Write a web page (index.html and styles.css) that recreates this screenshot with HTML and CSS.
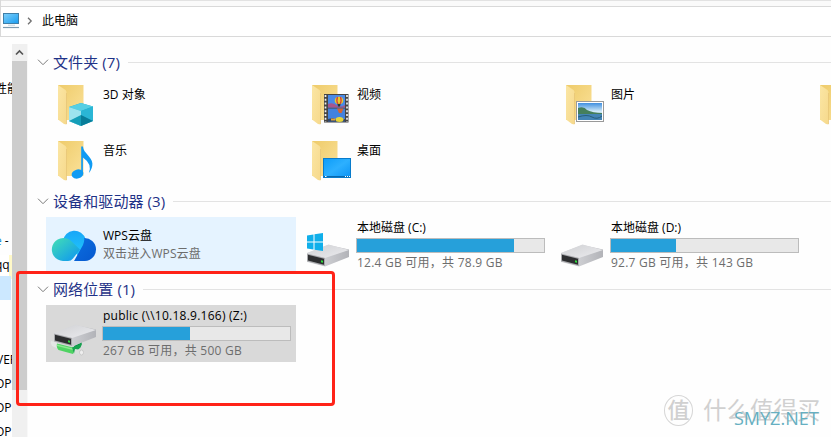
FILE: index.html
```html
<!DOCTYPE html>
<html lang="zh-CN">
<head>
<meta charset="utf-8">
<title>此电脑</title>
<link rel="stylesheet" href="styles.css">
</head>
<body>
<svg width="0" height="0" class="defs">
  <defs>
    <linearGradient id="back" x1="0" y1="0" x2="1" y2="1"><stop offset="0" stop-color="#eecb6a"/><stop offset="1" stop-color="#fbe29a"/></linearGradient>
    <linearGradient id="flap" x1="0" y1="0" x2="1" y2="1"><stop offset="0" stop-color="#fbe6a4"/><stop offset="1" stop-color="#f6d98c"/></linearGradient>
    <linearGradient id="screen" x1="0" y1="0" x2="1" y2="1"><stop offset="0" stop-color="#0c9cf8"/><stop offset=".5" stop-color="#2db0ff"/><stop offset="1" stop-color="#0a93f5"/></linearGradient>
    <linearGradient id="monitor" x1="0" y1="0" x2="1" y2="1"><stop offset="0" stop-color="#7fd0fa"/><stop offset="1" stop-color="#189cf0"/></linearGradient>
    <linearGradient id="metal" x1="0" y1="0" x2="1" y2="1"><stop offset="0" stop-color="#cfd0d3"/><stop offset="1" stop-color="#ececef"/></linearGradient>
    <linearGradient id="side" x1="0" y1="0" x2="1" y2="0"><stop offset="0" stop-color="#e2e3e6"/><stop offset="1" stop-color="#b2b3b8"/></linearGradient>
    <linearGradient id="cloudL" x1="0" y1="0" x2="1" y2="1"><stop offset="0" stop-color="#43e0b4"/><stop offset="1" stop-color="#0c93f3"/></linearGradient>
    <linearGradient id="cloudT" x1="0" y1="0" x2="0" y2="1"><stop offset="0" stop-color="#18a6f8"/><stop offset="1" stop-color="#22c8fb"/></linearGradient>
    <linearGradient id="cloudR" x1="0" y1="0" x2="1" y2="1"><stop offset="0" stop-color="#0b6fe0"/><stop offset="1" stop-color="#0658cf"/></linearGradient>
    <linearGradient id="sky" x1="0" y1="0" x2="0" y2="1"><stop offset="0" stop-color="#3f8fe0"/><stop offset=".5" stop-color="#d3ebf8"/><stop offset="1" stop-color="#9cc9e8"/></linearGradient>
    <g id="folder">
      <path d="M12 8H37.500V43H12Z" fill="url(#back)"/>
      <path d="M12 8L19.500 13Q20.500 14 20.500 16V47.500L18 47L12 42.500Z" fill="url(#flap)"/>
      <path d="M20.500 16V47" stroke="#e5c374" stroke-width=".7"/>
    </g>
    <g id="drive">
      <path d="M7 36L28.500 28L49 32.500V40L25 49.500L7 45Z" fill="url(#side)"/>
      <path d="M7 36L28.500 27.500L49 33L25 41Z" fill="url(#metal)"/>
      <path d="M7 36.500L25 41V49L7 44.500Z" fill="#a8a9ac"/>
      <path d="M8 37.700L24 41.800V47.800L8 43.600Z" fill="#2d2e30"/>
      <path d="M21 43.300l2 .5v2l-2-.5z" fill="#2de03a"/>
    </g>
  </defs>
</svg>

<header class="address">
  <svg class="pc" width="18" height="18" viewBox="0 0 18 18"><rect x=".5" y="1.500" width="15" height="10" fill="url(#monitor)" stroke="#3f7fa8"/><path d="M0 15.500H16" stroke="#7e9cb0" stroke-width="1.200"/><path d="M5 13.200h7" stroke="#c5d4dc"/></svg>
  <svg class="sep" width="6" height="8" viewBox="0 0 6 8"><path d="M1 .8L4.200 4L1 7.200" fill="none" stroke="#707070" stroke-width="1.300"/></svg>
  <span>此电脑</span>
</header>

<div class="window">
  <aside class="tree">
    <span class="t1">性能</span>
    <span class="t2"><i>e</i> -</span>
    <span class="t3">qq</span>
    <span class="picked"></span>
    <span class="t4">VER</span>
    <span class="t5">OP</span>
    <span class="t5">OP</span>
    <span class="t5">OP</span>
  </aside>
  <div class="scrollbar">
    <svg width="15" height="17" viewBox="0 0 15 17"><path d="M4 10.500L7.500 7L11 10.500" fill="none" stroke="#555" stroke-width="1.700"/></svg>
    <div class="thumb"></div>
  </div>

  <main class="content">
    <section class="folders">
      <h2><svg width="12" height="7" viewBox="0 0 12 7"><path d="M1 .7L6 5.700L11 .7" fill="none" stroke="#7a7a7a"/></svg><span>文件夹 (7)</span></h2>
      <div class="grid">
        <div class="tile"><svg class="icon" viewBox="0 0 57 56"><use href="#folder"/><path d="M23 30L35 26L47 29.500V44L35 49L23 44Z" fill="#22a9c9"/><path d="M23 30L35 26L47 29.500L35 34Z" fill="#56cfe4"/><path d="M23 30L35 34V49L23 44Z" fill="#9de3ee"/><path d="M23 44L35 38V49Z" fill="#159eb8"/><path d="M35 34L47 29.500V44L35 38Z" fill="#2ab6d5"/><path d="M35 38L47 44L35 49Z" fill="#087d99"/></svg><p>3D 对象</p></div>
        <div class="tile"><svg class="icon" viewBox="0 0 57 56"><use href="#folder"/><rect x="24" y="17" width="24.500" height="28.500" fill="#454545"/><path d="M25.500 18V45M47 18V45" stroke="#eee" stroke-width="1.700" stroke-dasharray="2 1.800"/><rect x="28" y="18" width="17" height="12.500" fill="#4a8ae6"/><rect x="28" y="31.500" width="17" height="13" fill="#4182de"/><path d="M28 27q4-2 8 1t9 0v2.500H28z" fill="#a8568c"/><path d="M28 42l5-1 4 2 8-1v2.500H28z" fill="#33486a"/><ellipse cx="39" cy="23.500" rx="4.200" ry="3.800" fill="#e3cf2e"/><path d="M37.500 20q-1.500 4 .5 7M40.500 20q1.500 4-.5 7" stroke="#d43b3d" stroke-width="1.300" fill="none"/><path d="M37.500 27h3l-.5 2.500h-2z" fill="#2f3c2d"/><path d="M37 31.500h6.500l-2 4.500h-2.500z" fill="#d46532"/><ellipse cx="39.500" cy="42.500" rx="4" ry="2.500" fill="#e6d438"/><path d="M31 42.500h4" stroke="#e3a23a" stroke-width="2"/></svg><p>视频</p></div>
        <div class="tile"><svg class="icon" viewBox="0 0 57 56"><use href="#folder"/><rect x="22.500" y="24.500" width="27" height="20" fill="#fff" stroke="#999"/><rect x="24" y="26" width="24" height="17" fill="url(#sky)"/><path d="M24 31q6-2 9 2 6 3 15 3v2H24z" fill="#457f5b"/><path d="M24 37h24v6H24z" fill="#4384b4"/><path d="M24 40q9-3 14 0t10-1" fill="none" stroke="#265f7c"/></svg><p>图片</p></div>
        <div class="tile"><svg class="icon" viewBox="0 0 57 56"><use href="#folder"/></svg></div>
        <div class="tile first"><svg class="icon" viewBox="0 0 57 56"><use href="#folder"/><ellipse cx="31.500" cy="41" rx="6" ry="4.500" transform="rotate(-15 31.500 41)" fill="#109bf3"/><path d="M35.200 41V13.500h1.700c.7 7 9.100 10 9.500 17q.2 5-3.500 9.500q3.500-9-6-15.500V41z" fill="#109bf3"/></svg><p>音乐</p></div>
        <div class="tile"><svg class="icon" viewBox="0 0 57 56"><use href="#folder"/><rect x="23.500" y="25.500" width="27" height="19" fill="url(#screen)" stroke="#087bcb"/><path d="M24 43.500h26" stroke="#0868ad"/><path d="M25 43.500h1.500M45 43.500h1M47 43.500h1M49 43.500h1" stroke="#fff"/></svg><p>桌面</p></div>
      </div>
    </section>

    <section class="devices">
      <h2><svg width="12" height="7" viewBox="0 0 12 7"><path d="M1 .7L6 5.700L11 .7" fill="none" stroke="#7a7a7a"/></svg><span>设备和驱动器 (3)</span></h2>
      <div class="grid">
        <div class="tile hover"><svg class="icon" viewBox="0 0 57 56"><path d="M17 24a11.500 11.500 0 0 1 22.500-2l1 13-9 3z" fill="url(#cloudT)"/><path d="M28 44l9-16q2-6 1-7a11.500 11.500 0 1 1 1 23z" fill="url(#cloudR)"/><path d="M17 44a11.500 11.500 0 1 1 7.500-20.500L34 32.500l-7 9q-2 2.500-5 2.500z" fill="url(#cloudL)"/></svg><div class="info wps"><p>WPS云盘</p><small>双击进入WPS云盘</small></div></div>
        <div class="tile"><svg class="icon" viewBox="0 0 57 56"><use href="#drive"/><path d="M7 18.500L13.500 17.500V24.500H7ZM14.500 17.300L23 16V24.500H14.500ZM7 25.500H13.500V32.500L7 31.500ZM14.500 25.500H23V34L14.500 32.700Z" fill="#10afea"/></svg><div class="info"><p>本地磁盘 (C:)</p><div class="bar"><b style="width:84%"></b></div><small class="cap">12.4 GB 可用，共 78.9 GB</small></div></div>
        <div class="tile"><svg class="icon" viewBox="0 0 57 56"><use href="#drive"/></svg><div class="info"><p>本地磁盘 (D:)</p><div class="bar"><b style="width:34.6%"></b></div><small class="cap">92.7 GB 可用，共 143 GB</small></div></div>
      </div>
    </section>

    <section class="network">
      <h2><svg width="12" height="7" viewBox="0 0 12 7"><path d="M1 .7L6 5.700L11 .7" fill="none" stroke="#7a7a7a"/></svg><span>网络位置 (1)</span></h2>
      <div class="grid">
        <div class="tile selected"><svg class="icon" viewBox="0 0 57 56"><path d="M5 36l8 2v6l-7-3q-2-3-1-5z" fill="#e4e7e6"/><path d="M28 41l8-4-1 4-6 5z" fill="#079348"/><use href="#drive" y="-8" x="1"/><path d="M11 38.500l16 4q2 3 0 6.500l-14.500-4q-2.500-3-1.500-6.500z" fill="#4fd363"/><path d="M11 39.500l16 4v1.500l-16-4z" fill="#8cea90"/><path d="M26 42.500l10-4-1.500 4-6.500 6z" fill="#17a34f"/><path d="M29 44l7 1q2 3 0 5l-8-1.500z" fill="#d9dfdc"/><ellipse cx="35.500" cy="47.500" rx="2" ry="2.500" fill="#eee" stroke="#bbb" stroke-width=".6"/></svg><div class="info"><p class="share">public (\\10.18.9.166) (Z:)</p><div class="bar"><b style="width:46.400%"></b></div><small class="cap">267 GB 可用，共 500 GB</small></div></div>
      </div>
    </section>
  </main>
</div>

<div class="marker"></div>
<div class="watermark"><span class="seal">值</span><span class="brand">什么值得买</span></div>
<div class="site">SMYZ.NET</div>
</body>
</html>
```

FILE: styles.css
```css
* { box-sizing: border-box; }
body {
  margin: 0;
  width: 831px;
  height: 437px;
  overflow: hidden;
  position: relative;
  background: #fefefe;
  color: #000;
  font: 12px/16px "Open Sans", "Noto Sans CJK SC", sans-serif;
}
p, h2 { margin: 0; font-weight: 400; }
.defs { position: absolute; }

.address {
  height: 37px;
  margin-bottom: 7px;
  padding: 6px 0 0 2px;
  display: flex;
  align-items: center;
  border-bottom: 1px solid #d9d9d9;
  background: linear-gradient(#e2e2e2 0 1px, #fafafa 1px 6px, #d9d9d9 6px 7px, #fff 7px);
  border-left: 1px solid #d9d9d9;
}
.sep { margin: 0 9px 0 6px; }

.window { display: flex; height: 393px; }
.tree { width: 12px; padding-top: 35px; overflow: hidden; display: flex; flex-direction: column; white-space: nowrap; }
.tree span { flex: none; height: 24px; line-height: 20px; }
.tree .t1 { margin: 0 0 128px -5px; }
.tree .t2 { margin-left: -5px; }
.tree i { font-style: normal; color: #1b8ed6; }
.tree .t3 { margin-left: -5px; background: linear-gradient(90deg, #fff 14px, #fff9c8 14px); }
.tree .picked { height: 24px; margin: -3px 1px 50px 0; background: #cce8ff; }
.tree .t4 { margin-left: -4px; }
.tree .t5 { margin-left: -5px; }

.scrollbar { width: 16px; background: #f0f0f0; border-right: 1px solid #f8f8f8; }
.scrollbar svg { display: block; }
.thumb { height: 329px; background: #cdcdcd; }

.content { flex: 1; min-width: 0; overflow: hidden; padding: 4px 0 0 10px; }
h2 { display: flex; align-items: center; height: 28px; margin-bottom: 1px; font-size: 15px; line-height: 28px; color: #1e3287; white-space: nowrap; letter-spacing: .1px; }
h2 svg { margin: 0 3px 0 -1px; }
h2 span { margin-left: 1px; }
h2::after { content: ""; flex: 1; height: 1px; margin-left: 8px; background: #e3e3e3; }
.grid { display: grid; grid-template-columns: repeat(4, 250px); column-gap: 4px; grid-auto-rows: 56px; padding-left: 8px; }
.folders { height: 139px; }
.devices { height: 88px; }
.devices .grid, .network .grid { padding-top: 1px; }
.network .grid { grid-auto-rows: 57px; }
.first { grid-column: 1; }
.tile { display: flex; white-space: nowrap; }
.icon { width: 57px; height: 56px; flex: none; }
.folders p { padding-top: 10px; }
.hover { background: #e5f3ff; }
.selected { background: #d9d9d9; }
.info { padding-top: 3px; width: 189px; }
.wps { padding-top: 11px; }
.wps small { margin-top: 2px; letter-spacing: .1px; }
.share { letter-spacing: .25px; }
.bar { height: 15px; margin: 2px 1px 2px -1px; border: 1px solid #bcbcbc; background: #e8e8e8; }
.bar b { display: block; height: 13px; background: #26a0da; }
small { display: block; font-size: 12px; line-height: 16px; color: #6d6d6d; }
.cap { letter-spacing: .24px; }

.marker { position: absolute; left: 16px; top: 271px; width: 319px; height: 135px; border: 3px solid #ff2318; border-radius: 4px; }
.watermark { position: absolute; left: 664px; top: 394px; display: flex; align-items: center; gap: 10px; color: #d0d0d0; }
.seal { width: 29px; height: 31px; border: 1.5px solid #d6d6d6; border-radius: 50%; font-size: 22px; line-height: 27px; text-align: center; font-weight: 500; }
.brand { font-size: 23.500px; line-height: 32px; }
.site { position: absolute; left: 734px; top: 407px; font-size: 18px; line-height: 22px; color: #66afc1; }
```
